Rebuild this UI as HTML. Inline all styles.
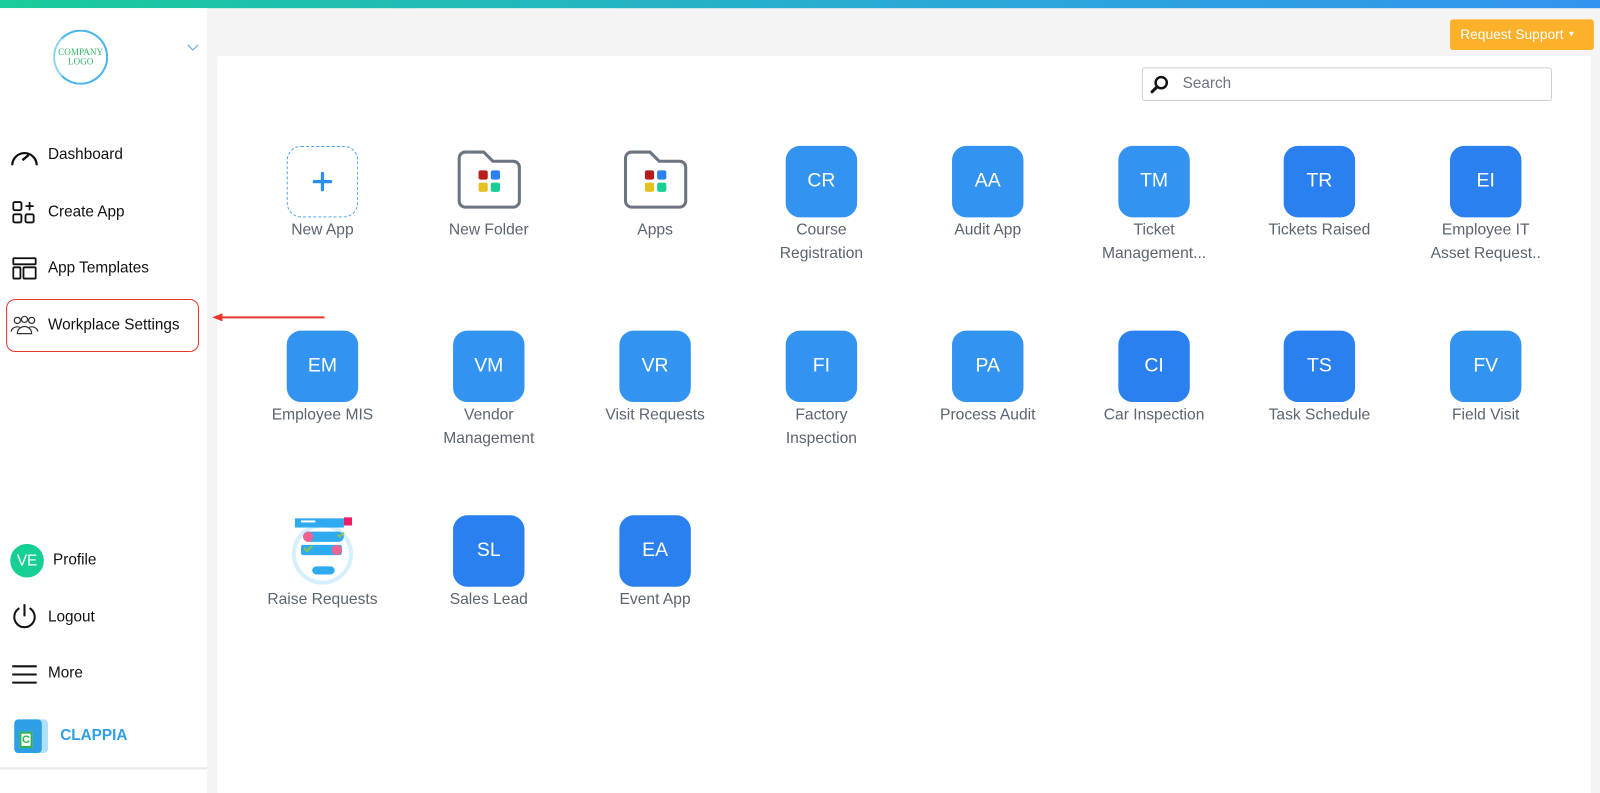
<!DOCTYPE html>
<html><head><meta charset="utf-8"><style>
*{margin:0;padding:0;box-sizing:border-box}
body{width:1600px;height:777px;overflow:hidden;background:#f4f4f4;font-family:"Liberation Sans",Arial,sans-serif;position:relative}
#w{position:absolute;left:0;top:0;width:1568px;height:762px;transform:scale(1.0204);transform-origin:0 0}
.top{position:absolute;left:0;top:0;width:1568px;height:8px;background:linear-gradient(90deg,#19cc9a,#2aa8d8 60%,#3294ef)}
.side{position:absolute;left:0;top:8px;width:203px;height:769px;background:#fff}
.main{position:absolute;left:213px;top:55px;width:1346px;height:722px;background:#fff}
.nav{position:absolute;left:47px;font-size:15px;color:#111;line-height:20px}
.ic{position:absolute}
.tile{position:absolute;width:160px;text-align:center}
.tile .b{width:70px;height:70px;border-radius:14px;margin:0 auto;color:#fff;font-size:19px;line-height:70px;background:#3294f0}
.tile .b.d{background:#2a80ef}
.tile .l{font-size:15.3px;color:#5b6470;line-height:23px;margin-top:1px}
</style></head><body><div id="w">
<div class="top"></div>
<div class="main"></div>
<div class="side">
  <div style="position:absolute;left:52px;top:21px;width:54px;height:54px;border-radius:50%;border:2px solid #4ab4ee;border-left-color:#8fd3f6;text-align:center;font-family:'Liberation Serif',serif;font-size:9px;line-height:9px;color:#35b56a;padding-top:16px">COMPANY<br>LOGO</div>
  <svg class="ic" style="left:183px;top:35px" width="12" height="8"><path d="M1 1l5 5 5-5" stroke="#6aaef0" fill="none" stroke-width="1.2"/></svg>
</div>
<svg class="ic" style="left:9px;top:141px" width="30" height="24" viewBox="0 0 30 24"><path d="M3 21A12 12 0 1 1 27 21" fill="none" stroke="#111" stroke-width="2.2"/><path d="M13 16l6-5" stroke="#111" stroke-width="2.4"/></svg>
<div class="nav" style="top:142px">Dashboard</div>
<svg class="ic" style="left:12px;top:197px" width="24" height="22" viewBox="0 0 24 22"><rect x="1" y="1" width="8" height="8" rx="1.5" fill="none" stroke="#111" stroke-width="1.8"/><rect x="1" y="13" width="8" height="8" rx="1.5" fill="none" stroke="#111" stroke-width="1.8"/><rect x="13" y="13" width="8" height="8" rx="1.5" fill="none" stroke="#111" stroke-width="1.8"/><path d="M17 1v8M13 5h8" stroke="#111" stroke-width="1.8"/></svg>
<div class="nav" style="top:198px">Create App</div>
<svg class="ic" style="left:12px;top:252px" width="24" height="22" viewBox="0 0 24 22"><rect x="1" y="1" width="22" height="6" rx="1" fill="none" stroke="#111" stroke-width="1.8"/><rect x="1" y="10" width="7" height="11" rx="1" fill="none" stroke="#111" stroke-width="1.8"/><rect x="11" y="10" width="12" height="11" rx="1" fill="none" stroke="#111" stroke-width="1.8"/></svg>
<div class="nav" style="top:253px">App Templates</div>
<div style="position:absolute;left:6px;top:293px;width:189px;height:52px;border:1.5px solid #e8372c;border-radius:9px"></div>
<svg class="ic" style="left:10px;top:309px" width="28" height="20" viewBox="0 0 28 20"><g fill="none" stroke="#333" stroke-width="1.2"><circle cx="7" cy="5" r="3"/><circle cx="14" cy="4" r="3"/><circle cx="21" cy="5" r="3"/><path d="M1 16a6 5 0 0 1 9-4M27 16a6 5 0 0 0-9-4M7 18a7 7 0 0 1 14 0z"/></g></svg>
<div class="nav" style="top:309px">Workplace Settings</div>
<svg class="ic" style="left:206px;top:306px" width="114" height="10"><path d="M112 5H10" stroke="#e8372c" stroke-width="2"/><path d="M2 5l10-4v8z" fill="#e8372c"/></svg>
<div style="position:absolute;left:10px;top:533px;width:33px;height:33px;border-radius:50%;background:#15cf95;color:#fff;font-size:15px;line-height:33px;text-align:center">VE</div>
<div class="nav" style="top:539px;left:52px">Profile</div>
<svg class="ic" style="left:11px;top:591px" width="26" height="26" viewBox="0 0 26 26"><path d="M8 5A10 10 0 1 0 18 5" fill="none" stroke="#111" stroke-width="2"/><path d="M13 1v12" stroke="#111" stroke-width="2"/></svg>
<div class="nav" style="top:595px">Logout</div>
<svg class="ic" style="left:11px;top:651px" width="26" height="20"><path d="M1 2h24M1 10h24M1 18h24" stroke="#111" stroke-width="2"/></svg>
<div class="nav" style="top:650px">More</div>
<div style="position:absolute;left:14px;top:705px;width:33px;height:33px;background:#aee0f7;border-radius:4px"></div>
<div style="position:absolute;left:14px;top:705px;width:27px;height:33px;background:#2e9ee6;border-radius:4px"></div>
<div style="position:absolute;left:19px;top:717px;width:13px;height:16px;background:#fff;border:2px solid #2bb14f;color:#2bb14f;font-size:11px;font-weight:bold;line-height:12px;text-align:center">C</div>
<div style="position:absolute;left:59px;top:712px;font-size:15px;font-weight:bold;color:#2e9ee6">CLAPPIA</div>
<div style="position:absolute;left:0;top:752px;width:203px;height:2px;background:#e8e8e8"></div>

<div style="position:absolute;left:1421px;top:19px;width:141px;height:30px;background:#fdb02a;border-radius:3px;color:#fff;font-size:13.5px;line-height:30px;padding-left:10px">Request Support <span style="font-size:8px;vertical-align:2px">▼</span></div>
<div style="position:absolute;left:1119px;top:66px;width:402px;height:33px;border:1px solid #ccd0d5;border-radius:3px;background:#fff"></div>
<svg class="ic" style="left:1126px;top:72px" width="22" height="22" viewBox="0 0 22 22"><circle cx="12" cy="9" r="5.5" fill="none" stroke="#111" stroke-width="2.4"/><path d="M8 13l-5 5" stroke="#111" stroke-width="3" stroke-linecap="round"/></svg>
<div style="position:absolute;left:1159px;top:73px;font-size:15px;color:#6b7280">Search</div>

<div class="tile" style="left:236px;top:143px"><div class="b" style="background:#fff;border:1.5px dashed #4aa3f0;position:relative"><svg style="position:absolute;left:24px;top:24px" width="20" height="20"><path d="M10 2v16M2 10h16" stroke="#2a8ef0" stroke-width="3.2" stroke-linecap="round"/></svg></div><div class="l">New App</div></div>
<div class="tile" style="left:399px;top:143px"><svg width="66" height="70" viewBox="0 0 66 70" style="display:block;margin:0 auto"><path d="M4 12a6 6 0 0 1 6-6h18l9 9h20a6 6 0 0 1 6 6v33a6 6 0 0 1-6 6H10a6 6 0 0 1-6-6z" fill="none" stroke="#6b7480" stroke-width="3"/><rect x="23" y="24" width="9" height="9" rx="2" fill="#b71c1c"/><rect x="35" y="24" width="9" height="9" rx="2" fill="#2a80ef"/><rect x="23" y="36" width="9" height="9" rx="2" fill="#e6c220"/><rect x="35" y="36" width="9" height="9" rx="2" fill="#18cf95"/></svg><div class="l">New Folder</div></div>
<div class="tile" style="left:562px;top:143px"><svg width="66" height="70" viewBox="0 0 66 70" style="display:block;margin:0 auto"><path d="M4 12a6 6 0 0 1 6-6h18l9 9h20a6 6 0 0 1 6 6v33a6 6 0 0 1-6 6H10a6 6 0 0 1-6-6z" fill="none" stroke="#6b7480" stroke-width="3"/><rect x="23" y="24" width="9" height="9" rx="2" fill="#b71c1c"/><rect x="35" y="24" width="9" height="9" rx="2" fill="#2a80ef"/><rect x="23" y="36" width="9" height="9" rx="2" fill="#e6c220"/><rect x="35" y="36" width="9" height="9" rx="2" fill="#18cf95"/></svg><div class="l">Apps</div></div>
<div class="tile" style="left:725px;top:143px"><div class="b">CR</div><div class="l">Course<br>Registration</div></div>
<div class="tile" style="left:888px;top:143px"><div class="b">AA</div><div class="l">Audit App</div></div>
<div class="tile" style="left:1051px;top:143px"><div class="b">TM</div><div class="l">Ticket<br>Management...</div></div>
<div class="tile" style="left:1213px;top:143px"><div class="b d">TR</div><div class="l">Tickets Raised</div></div>
<div class="tile" style="left:1376px;top:143px"><div class="b d">EI</div><div class="l">Employee IT<br>Asset Request..</div></div>
<div class="tile" style="left:236px;top:324px"><div class="b">EM</div><div class="l">Employee MIS</div></div>
<div class="tile" style="left:399px;top:324px"><div class="b">VM</div><div class="l">Vendor<br>Management</div></div>
<div class="tile" style="left:562px;top:324px"><div class="b">VR</div><div class="l">Visit Requests</div></div>
<div class="tile" style="left:725px;top:324px"><div class="b">FI</div><div class="l">Factory<br>Inspection</div></div>
<div class="tile" style="left:888px;top:324px"><div class="b">PA</div><div class="l">Process Audit</div></div>
<div class="tile" style="left:1051px;top:324px"><div class="b d">CI</div><div class="l">Car Inspection</div></div>
<div class="tile" style="left:1213px;top:324px"><div class="b d">TS</div><div class="l">Task Schedule</div></div>
<div class="tile" style="left:1376px;top:324px"><div class="b">FV</div><div class="l">Field Visit</div></div>
<div class="tile" style="left:236px;top:505px"><svg width="70" height="70" viewBox="0 0 70 70" style="display:block;margin:0 auto"><circle cx="35" cy="38" r="30" fill="#d6effc"/><circle cx="35" cy="38" r="26" fill="#fff"/><rect x="8" y="3" width="48" height="9" fill="#2eaaf0"/><rect x="56" y="2" width="8" height="8" fill="#e91e63"/><rect x="14" y="5" width="14" height="2" fill="#fff"/><rect x="16" y="16" width="40" height="10" rx="5" fill="#2eaaf0"/><circle cx="21" cy="21" r="5" fill="#f06292"/><rect x="14" y="29" width="40" height="10" rx="2" fill="#2eaaf0"/><circle cx="49" cy="34" r="5" fill="#f06292"/><path d="M17 32l3 3 5-5M50 19l2 2 4-4" stroke="#8bc34a" stroke-width="2" fill="none"/><rect x="25" y="50" width="22" height="8" rx="4" fill="#2eaaf0"/></svg><div class="l">Raise Requests</div></div>
<div class="tile" style="left:399px;top:505px"><div class="b d">SL</div><div class="l">Sales Lead</div></div>
<div class="tile" style="left:562px;top:505px"><div class="b d">EA</div><div class="l">Event App</div></div>
</div></body></html>
